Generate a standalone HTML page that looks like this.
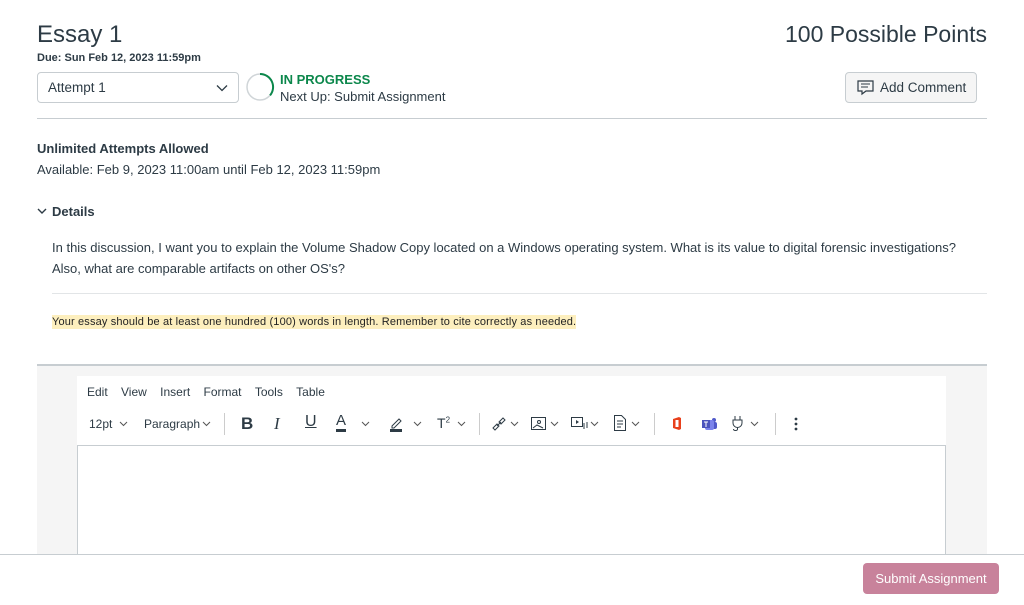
<!DOCTYPE html>
<html><head><meta charset="utf-8"><style>
*{box-sizing:border-box;margin:0;padding:0}
body{width:1024px;height:605px;overflow:hidden;background:#fff;font-family:"Liberation Sans",sans-serif;color:#2d3b45;position:relative}
.a{position:absolute;white-space:nowrap}
svg{display:block}
.cv{position:absolute;width:9px;height:6px}
</style></head><body>
<svg width="0" height="0" style="position:absolute"><defs><symbol id="c" viewBox="0 0 9 6"><path d="M1 1 4.5 4.5 8 1" stroke="#555" stroke-width="1" fill="none"/></symbol></defs></svg>
<div class="a" style="left:37px;top:21px;font-size:24px;font-weight:300;color:#2d3b45">Essay 1</div>
<div class="a" style="right:37px;top:21px;font-size:23px;color:#2d3b45">100 Possible Points</div>
<div class="a" style="left:37px;top:52px;font-size:11px;font-weight:bold">Due: Sun Feb 12, 2023 11:59pm</div>
<div class="a" style="left:37px;top:72px;width:202px;height:31px;border:1px solid #c7cdd1;border-radius:4px;font-size:13.5px;padding:7px 10px">Attempt 1
<svg style="position:absolute;right:10px;top:11px" width="12" height="8"><path d="M1 1.5 6 6.5 11 1.5" stroke="#2d3b45" stroke-width="1.3" fill="none"/></svg></div>
<svg class="a" style="left:245px;top:72px" width="30" height="30"><circle cx="15" cy="15" r="13" stroke="#d0d5d8" stroke-width="1.5" fill="none"/><path d="M15 2 A13 13 0 0 1 25 23.4" stroke="#0b874b" stroke-width="2" fill="none"/></svg>
<div class="a" style="left:280px;top:72px;font-size:13px;font-weight:bold;color:#0b874b">IN PROGRESS</div>
<div class="a" style="left:280px;top:89px;font-size:13px">Next Up: Submit Assignment</div>
<div class="a" style="left:845px;top:72px;width:132px;height:31px;border:1px solid #c7cdd1;border-radius:4px;background:#f5f5f5;font-size:13.5px;padding:7px 0 0 34px">Add Comment
<svg style="position:absolute;left:11px;top:7px" width="18" height="16"><path d="M1 1h15v10H9l-4 3v-3H1z" stroke="#2d3b45" stroke-width="1.2" fill="none"/><path d="M4 4h9M4 7h7" stroke="#2d3b45"/></svg></div>
<div class="a" style="left:37px;top:118px;width:950px;height:1px;background:#c7cdd1"></div>
<div class="a" style="left:37px;top:141px;font-size:13px;font-weight:bold">Unlimited Attempts Allowed</div>
<div class="a" style="left:37px;top:162px;font-size:13px">Available: Feb 9, 2023 11:00am until Feb 12, 2023 11:59pm</div>
<svg class="a" style="left:37px;top:208px" width="10" height="7"><path d="M1 1 5 5 9 1" stroke="#2d3b45" stroke-width="1.4" fill="none"/></svg>
<div class="a" style="left:52px;top:204px;font-size:13px;font-weight:bold">Details</div>
<div class="a" style="left:52px;top:237px;font-size:13px;line-height:21px;white-space:normal;width:930px">In this discussion, I want you to explain the Volume Shadow Copy located on a Windows operating system. What is its value to digital forensic investigations? Also, what are comparable artifacts on other OS's?</div>
<div class="a" style="left:52px;top:293px;width:935px;height:1px;background:#e2e5e7"></div>
<div class="a" style="left:52px;top:315px;font-size:11px;letter-spacing:0.15px;background:#fdefbe;color:#222;line-height:14px">Your essay should be at least one hundred (100) words in length. Remember to cite correctly as needed.</div>
<div class="a" style="left:37px;top:364px;width:950px;height:190px;background:#f5f5f5;border-top:2px solid #c7cdd1"></div>
<div class="a" style="left:77px;top:376px;width:869px;height:178px;background:#fff"></div>
<div class="a" style="left:87px;top:385px;font-size:12px;color:#2d3b45">Edit&nbsp;&nbsp;&nbsp;&nbsp;View&nbsp;&nbsp;&nbsp;&nbsp;Insert&nbsp;&nbsp;&nbsp;&nbsp;Format&nbsp;&nbsp;&nbsp;&nbsp;Tools&nbsp;&nbsp;&nbsp;&nbsp;Table</div>
<div class="a" style="left:89px;top:417px;font-size:12px">12pt</div><svg class="cv" style="left:119px;top:421px"><use href="#c"/></svg>
<div class="a" style="left:144px;top:417px;font-size:12px">Paragraph</div><svg class="cv" style="left:202px;top:421px"><use href="#c"/></svg>
<div class="a" style="left:224px;top:413px;width:1px;height:22px;background:#ccc"></div>
<div class="a" style="left:241px;top:414px;font-size:17px;font-weight:bold">B</div>
<div class="a" style="left:274px;top:414px;font-size:17px;font-style:italic;font-family:'Liberation Serif',serif">I</div>
<div class="a" style="left:305px;top:413px;font-size:16px;text-decoration:underline">U</div>
<div class="a" style="left:336px;top:413px;font-size:15px;border-bottom:3px solid #2d3b45;line-height:16px">A</div>
<svg class="cv" style="left:361px;top:421px"><use href="#c"/></svg>
<svg class="a" style="left:389px;top:416px" width="14" height="16"><path d="M3 10 10 3l2 2-7 7H3z" stroke="#2d3b45" fill="none"/><rect x="1" y="13" width="12" height="3" fill="#2d3b45"/></svg>
<svg class="cv" style="left:413px;top:421px"><use href="#c"/></svg>
<div class="a" style="left:437px;top:415px;font-size:14px">T<sup style="font-size:8px">2</sup></div>
<svg class="cv" style="left:457px;top:421px"><use href="#c"/></svg>
<div class="a" style="left:479px;top:413px;width:1px;height:22px;background:#ccc"></div>
<svg class="a" style="left:491px;top:416px" width="16" height="16"><path d="M2 12l4-4 2 2-4 4zM8 6l4-4 2 2-4 4zM6 10l4-4" stroke="#2d3b45" fill="none"/></svg>
<svg class="cv" style="left:510px;top:421px"><use href="#c"/></svg>
<svg class="a" style="left:531px;top:417px" width="15" height="13"><rect x="0.5" y="0.5" width="14" height="12" stroke="#2d3b45" fill="none"/><circle cx="8" cy="5" r="1.5" stroke="#2d3b45" fill="none"/><path d="M2 11l4-3 6 3" stroke="#2d3b45" fill="none"/></svg>
<svg class="cv" style="left:550px;top:421px"><use href="#c"/></svg>
<svg class="a" style="left:571px;top:417px" width="17" height="13"><rect x="0.5" y="0.5" width="11" height="9" stroke="#2d3b45" fill="none"/><path d="M5 3v4l3-2z" fill="#2d3b45"/><path d="M13 6v6M16 5v6" stroke="#2d3b45"/></svg>
<svg class="cv" style="left:590px;top:421px"><use href="#c"/></svg>
<svg class="a" style="left:614px;top:415px" width="12" height="16"><path d="M.5.5h7l4 4v11H.5z" stroke="#2d3b45" fill="none"/><path d="M3 6h6M3 9h6M3 12h4" stroke="#2d3b45"/></svg>
<svg class="cv" style="left:631px;top:421px"><use href="#c"/></svg>
<div class="a" style="left:654px;top:413px;width:1px;height:22px;background:#ccc"></div>
<svg class="a" style="left:672px;top:417px" width="10" height="13"><path d="M1 2 7 0l2 1v11l-2 1-6-2z" fill="#e8401c"/><rect x="3.5" y="3" width="3" height="7" fill="#fff"/></svg>
<svg class="a" style="left:702px;top:417px" width="16" height="13"><circle cx="12" cy="3" r="2" fill="#5059c9"/><rect x="9" y="5" width="6" height="7" rx="2" fill="#5059c9"/><rect x="3" y="3" width="9" height="10" rx="2" fill="#7b83eb"/><rect x="0" y="3" width="8" height="8" fill="#4b53bc"/><path d="M2 5h4M4 5v5" stroke="#fff"/></svg>
<svg class="a" style="left:731px;top:415px" width="14" height="17"><path d="M4 1v4M9 1v4M2 5h9v3a4 4 0 0 1-9 0zM6.5 12v2c0 2-4 2-4 0" stroke="#2d3b45" fill="none"/></svg>
<svg class="cv" style="left:750px;top:421px"><use href="#c"/></svg>
<div class="a" style="left:775px;top:413px;width:1px;height:22px;background:#ccc"></div>
<svg class="a" style="left:794px;top:417px" width="4" height="14"><circle cx="2" cy="2" r="1.4" fill="#2d3b45"/><circle cx="2" cy="7" r="1.4" fill="#2d3b45"/><circle cx="2" cy="12" r="1.4" fill="#2d3b45"/></svg>
<div class="a" style="left:77px;top:445px;width:869px;height:120px;border:1px solid #c7cdd1;border-bottom:none"></div>
<div class="a" style="left:0;top:554px;width:1024px;height:51px;background:#fff;border-top:1px solid #c7cdd1"></div>
<div class="a" style="left:863px;top:563px;width:136px;height:31px;background:#c8829b;border-radius:4px;color:#fff;font-size:13px;text-align:center;line-height:31px">Submit Assignment</div>
</body></html>
